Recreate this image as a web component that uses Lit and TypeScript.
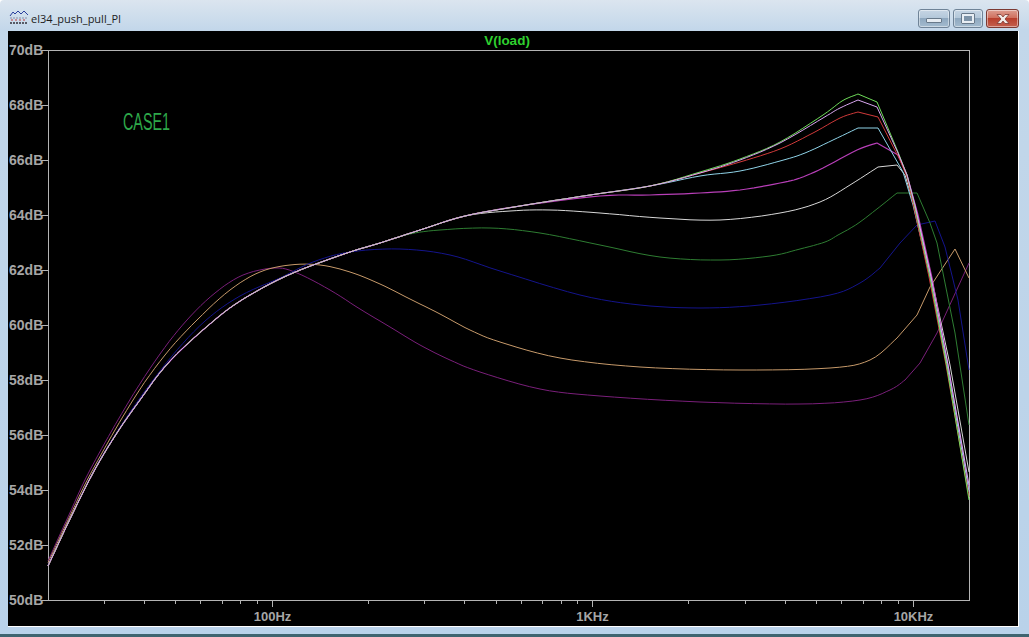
import { LitElement, html, css, svg } from "lit";
import { customElement } from "lit/decorators.js";

type P = [number, number];

// Catmull-Rom sampled polyline through the points, so the long runs read as smooth curves
function smooth(pts: P[]): P[] {
  const out: P[] = [];
  for (let i = 0; i < pts.length - 1; i++) {
    const p0 = pts[Math.max(i - 1, 0)];
    const p1 = pts[i];
    const p2 = pts[i + 1];
    const p3 = pts[Math.min(i + 2, pts.length - 1)];
    for (let k = 0; k < 6; k++) {
      const t = k / 6;
      const t2 = t * t;
      const t3 = t2 * t;
      const f = (a: number, b: number, c: number, d: number) =>
        0.5 * (2 * b + (c - a) * t + (2 * a - 5 * b + 4 * c - d) * t2 + (3 * b - a - 3 * c + d) * t3);
      out.push([f(p0[0], p1[0], p2[0], p3[0]), f(p0[1], p1[1], p2[1], p3[1])]);
    }
  }
  out.push(pts[pts.length - 1]);
  return out;
}

const trunkA: P[] = [[48, 566], [70, 519], [93, 473], [115, 436], [140, 400], [170, 361], [217, 318], [250, 295], [293, 273]];
const trunkB: P[] = [[347, 253], [380, 243], [420, 230], [465, 216]];
const trunkC: P[] = [[520, 206], [590, 195], [650, 186]];

const trunk = (...rest: P[][]) => [...trunkA, ...rest.flat()];
const upper = [...trunkB, ...trunkC];

interface Curve { c: string; w?: number; head: P[]; tail: P[]; }

const curves: Curve[] = [
  { c: "#7a1f7a", head: [[48, 561], [68, 517], [90, 470], [128, 403], [160, 354], [187, 320], [215, 293], [243, 275], [275, 268], [297, 273], [330, 290], [360, 309], [390, 327], [420, 345], [450, 360], [480, 372], [540, 389], [600, 396], [700, 402], [800, 404], [860, 400], [890, 390], [905, 380]], tail: [[920, 363], [937, 333], [969, 263]] },
  { c: "#c79a6a", head: [[48, 563], [69, 518], [92, 471], [133, 400], [165, 355], [197, 320], [230, 290], [260, 272], [290, 265], [320, 265], [350, 272], [380, 284], [410, 299], [440, 314], [470, 330], [500, 342], [560, 358], [640, 367], [740, 370], [830, 368], [870, 360], [897, 338]], tail: [[917, 315], [930, 287], [955, 249], [969, 278]] },
  { c: "#14148c", head: [[48, 565], [70, 519], [93, 472], [115, 435], [140, 398], [172, 356], [205, 321], [240, 296], [280, 278], [313, 262], [350, 252], [400, 249], [450, 255], [500, 271], [580, 295], [640, 305], [700, 308], [760, 305], [830, 295], [860, 283], [880, 268]], tail: [[900, 243], [917, 225], [935, 221], [945, 247], [958, 300], [969, 370]] },
  { c: "#2e7d32", head: [...trunk(trunkB.slice(0, 2)), [410, 234], [440, 230], [490, 228], [540, 233], [600, 245], [660, 257], [720, 260], [770, 256], [800, 249], [825, 242], [838, 235], [860, 222], [897, 193]], tail: [[917, 193], [930, 223], [937, 243], [955, 333], [969, 425]] },
  { c: "#d8d8d8", head: [...trunk(trunkB), [510, 211], [550, 210], [600, 213], [660, 218], [720, 220], [780, 213], [820, 202], [850, 185], [878, 167]], tail: [[897, 165], [905, 175], [916, 212], [932, 280], [950, 365], [969, 472]] },
  { c: "#b83fb8", w: 1.2, head: [...trunk(upper.slice(0, 5)), [600, 196], [650, 195], [700, 193], [740, 190], [780, 183], [800, 178], [823, 168], [857, 150], [877, 143]], tail: [[898, 155], [907, 175], [918, 215], [932, 278], [948, 365], [969, 490]] },
  { c: "#8fd3e8", head: [...trunk(upper), [700, 176], [740, 171], [780, 161], [805, 153], [833, 140], [858, 128]], tail: [[878, 128], [903, 172], [913, 205], [930, 277], [947, 365], [969, 492]] },
  { c: "#d03a3a", head: [...trunk(upper), [700, 173], [740, 162], [780, 149], [813, 133], [840, 118], [858, 112]], tail: [[878, 117], [900, 160], [907, 177], [913, 203], [929, 277], [946, 365], [969, 497]] },
  { c: "#6fdc5a", head: [...trunk(upper), [700, 172], [740, 159], [780, 142], [823, 115], [842, 101], [858, 94]], tail: [[877, 102], [898, 152], [907, 175], [914, 203], [930, 277], [947, 368], [969, 500]] },
  { c: "#d9a6f0", head: [...trunk(upper), [700, 173], [740, 160], [780, 143], [823, 118], [840, 108], [858, 100]], tail: [[877, 107], [898, 153], [907, 175], [915, 205], [931, 277], [948, 365], [969, 485]] },
];

const pathOf = (c: Curve) =>
  [...smooth(c.head), ...c.tail].map((p, i) => `${i ? "L" : "M"}${p[0].toFixed(1)} ${p[1].toFixed(1)}`).join("");

const dbLabels = [70, 68, 66, 64, 62, 60, 58, 56, 54, 52, 50];
const dbY = (db: number) => 50.5 + ((70 - db) * 549.5) / 20;
const decade = 320.5;
const hzX = (hz: number) => 272 + Math.log10(hz / 100) * decade;
const minorHz = [30, 40, 50, 60, 70, 80, 90, 200, 300, 400, 500, 600, 700, 800, 900, 2000, 3000, 4000, 5000, 6000, 7000, 8000, 9000];
const majors: [number, string][] = [[100, "100Hz"], [1000, "1KHz"], [10000, "10KHz"]];

@customElement("app-root")
export class AppRoot extends LitElement {
  static styles = css`
    :host {
      display: block;
      width: 1029px;
      height: 637px;
      overflow: hidden;
    }
    .window {
      box-sizing: border-box;
      width: 1029px;
      height: 637px;
      display: flex;
      flex-direction: column;
      padding: 0 10px 7px 8px;
      background: linear-gradient(180deg, #dbe5ef 0, #c3d7ea 30px, #b9d2ea 100%);
      border-bottom: 3px solid #3f6470;
      border-radius: 4px 4px 0 0;
    }
    .titlebar {
      height: 31px;
      flex: none;
      display: flex;
      align-items: flex-start;
      gap: 2px;
      padding-left: 1px;
      font: 11px "Open Sans", "Noto Sans", sans-serif;
      color: #1c1c1c;
    }
    .icon { margin-top: 9px; flex: none; }
    .title { margin-top: 11px; line-height: 16px; flex: 1; }
    .buttons { display: flex; gap: 3px; margin-top: 9px; }
    .btn {
      box-sizing: border-box;
      height: 19px;
      width: 32px;
      border: 1px solid #6f8397;
      border-radius: 3px;
      box-shadow: inset 0 0 0 1px rgba(255, 255, 255, 0.45);
      background: linear-gradient(180deg, #c6d5e4 0, #b4c8da 45%, #8fa8bf 50%, #a3bbcf 100%);
      display: flex;
      align-items: center;
      justify-content: center;
    }
    .btn.restore { width: 30px; }
    .btn.close {
      width: 33px;
      border-color: #7c3a33;
      background: linear-gradient(180deg, #dd9d90 0, #d0715f 45%, #b83f2d 50%, #c4604f 100%);
    }
    .glyph-min {
      width: 16px;
      height: 5px;
      margin-top: 3px;
      box-sizing: border-box;
      background: #e6ecf2;
      border: 1px solid #68798a;
      border-radius: 1px;
    }
    .glyph-max {
      width: 14px;
      height: 11px;
      box-sizing: border-box;
      border: 3px solid #e8eef4;
      outline: 1px solid #68798a;
      outline-offset: -1px;
      border-radius: 1px;
      background: #7d93a8;
    }
    .plot {
      flex: 1;
      min-height: 0;
      background: #000;
      border-right: 1px solid #fff;
      border-bottom: 1px solid #fff;
    }
    .chart { display: block; }
    .axis { stroke: #b4b4b4; stroke-width: 1; fill: none; shape-rendering: crispEdges; }
    .label {
      font: bold 13px "Liberation Sans", Arial, sans-serif;
      fill: #a6a6a6;
    }
    .dblabel {
      font: bold 14px "Liberation Sans", Arial, sans-serif;
      fill: #a6a6a6;
    }
    .trace { fill: none; stroke-linejoin: round; }
    .vname {
      font: bold 13.500px "Liberation Sans", Arial, sans-serif;
      fill: #2fd02f;
    }
    .case {
      font: 24px "Liberation Sans", Arial, sans-serif;
      fill: #2ea84a;
    }
  `;

  render() {
    return html`
      <div class="window">
        <div class="titlebar">
          <svg class="icon" width="20" height="16" viewBox="0 0 20 16">
            <path d="M1 7 L4 3 L6 5 L9 2 L12 5 L15 2 L19 6" fill="none" stroke="#2a3f9e" stroke-width="1"/>
            <path d="M1 9 H19" stroke="#8a8fa8" stroke-width="1" stroke-dasharray="2 1"/>
            <path d="M2 11 H18" stroke="#c23a3a" stroke-width="1" stroke-dasharray="2 2"/>
            <path d="M1 14 H19" stroke="#30303a" stroke-width="1.4" stroke-dasharray="2 1"/>
          </svg>
          <span class="title">el34_push_pull_PI</span>
          <div class="buttons">
            <div class="btn"><div class="glyph-min"></div></div>
            <div class="btn restore"><div class="glyph-max"></div></div>
            <div class="btn close">
              <svg width="18" height="12" viewBox="0 0 18 12">
                <path d="M3 1.5 H7 L9 4 L11 1.5 H15 L11 6 L15 10.5 H11 L9 8 L7 10.5 H3 L7 6 Z" fill="#f2ece9" stroke="#7c3a33" stroke-width="0.8"/>
              </svg>
            </div>
          </div>
        </div>
        <div class="plot">
          <svg class="chart" width="1010" height="595" viewBox="8 31 1010 595">
            ${svg`
              <rect class="axis" x="48.5" y="50.5" width="921" height="550"></rect>
              ${dbLabels.map((d) => {
                const y = Math.round(dbY(d) - 0.5) + 0.5;
                return svg`
                  <line class="axis" x1="41" x2="48" y1=${y} y2=${y}></line>
                  <text class="dblabel" x="9" y=${y + 4.5}>${d}dB</text>`;
              })}
              ${minorHz.map((h) => {
                const x = Math.round(hzX(h) - 0.5) + 0.5;
                return svg`<line class="axis" x1=${x} x2=${x} y1="601" y2="604"></line>`;
              })}
              ${majors.map(([h, t]) => {
                const x = Math.round(hzX(h) - 0.5) + 0.5;
                return svg`
                  <line class="axis" x1=${x} x2=${x} y1="601" y2="607"></line>
                  <text class="label" x=${x} y="621" text-anchor="middle">${t}</text>`;
              })}
              <text class="vname" x="507" y="45" text-anchor="middle">V(load)</text>
              <text class="case" x="123" y="130" textLength="47" lengthAdjust="spacingAndGlyphs">CASE1</text>
              ${curves.map(
                (c) => svg`<path class="trace" d=${pathOf(c)} stroke=${c.c} stroke-width=${c.w ?? 1}></path>`
              )}
            `}
          </svg>
        </div>
      </div>
    `;
  }
}
